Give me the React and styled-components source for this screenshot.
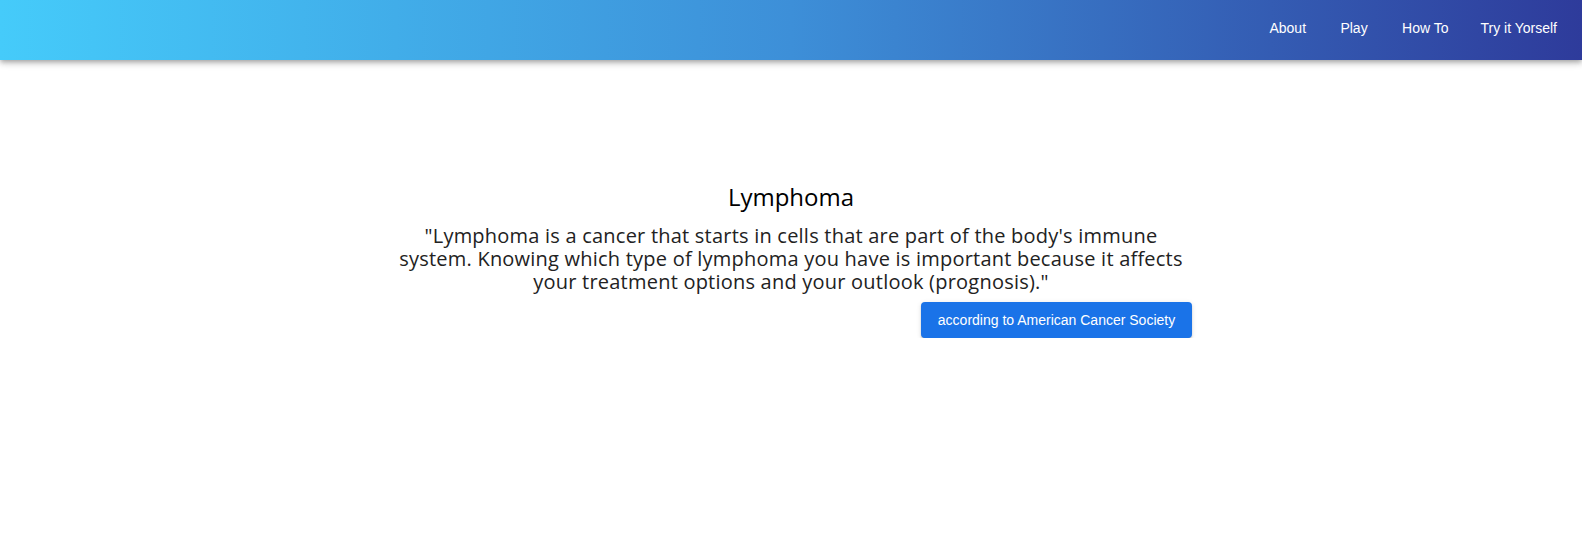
import React from "react"
import styled, { createGlobalStyle } from 'styled-components'

const GlobalStyle = createGlobalStyle`
  body {
    margin: 0;
    background: #ffffff;
    font-family: 'Open Sans', sans-serif;
  }
`

const Header = styled.header`
  height: 60px;
  box-sizing: border-box;
  display: flex;
  align-items: center;
  justify-content: flex-end;
  padding: 0 9px 4px 0;
  background: linear-gradient(90deg, #45cbfa 0%, #3d8fd8 50%, #2e3b9b 100%);
  box-shadow: 0 2px 4px -1px rgba(0,0,0,0.2), 0 4px 5px 0 rgba(0,0,0,0.14), 0 1px 10px 0 rgba(0,0,0,0.12);
`

const NavButton = styled.a`
  min-width: 64px;
  box-sizing: border-box;
  text-align: center;
  font-family: 'Liberation Sans', Arial, sans-serif;
  font-size: 14px;
  color: #ffffff;
  padding: 6px 16px;
  line-height: 20px;
  text-decoration: none;
  cursor: pointer;
`

const Main = styled.main`
  display: flex;
  justify-content: center;
  padding-top: 121px;
`

const Block = styled.section`
  width: 802px;
  display: flex;
  flex-direction: column;
  align-items: center;
`

const Title = styled.h1`
  margin: 0 0 11px;
  font-family: 'Open Sans', sans-serif;
  font-weight: 400;
  font-size: 24px;
  line-height: 32px;
  color: #000000;
`

const Quote = styled.p`
  margin: 0;
  font-family: 'Open Sans', sans-serif;
  font-size: 20px;
  letter-spacing: 0.22px;
  line-height: 23px;
  color: #222222;
  text-align: center;
`

const Source = styled.button`
  align-self: flex-end;
  margin-top: 9px;
  width: 271px;
  height: 36px;
  border: 0;
  border-radius: 4px;
  background: #1a73e8;
  color: #ffffff;
  font-family: 'Liberation Sans', Arial, sans-serif;
  font-size: 14px;
  box-shadow: 0 3px 1px -2px rgba(0,0,0,0.2), 0 2px 2px 0 rgba(0,0,0,0.14), 0 1px 5px 0 rgba(0,0,0,0.12);
  cursor: pointer;
`

export default () => {
  const links = ['About', 'Play', 'How To', 'Try it Yorself']

  return (
    <>
      <GlobalStyle />
      <Header>
        {links.map(l => <NavButton key={l}>{l}</NavButton>)}
      </Header>
      <Main>
        <Block>
          <Title>Lymphoma</Title>
          <Quote>
            "Lymphoma is a cancer that starts in cells that are part of the body's immune
            system. Knowing which type of lymphoma you have is important because it affects
            your treatment options and your outlook (prognosis)."
          </Quote>
          <Source>according to American Cancer Society</Source>
        </Block>
      </Main>
    </>
  )
}
